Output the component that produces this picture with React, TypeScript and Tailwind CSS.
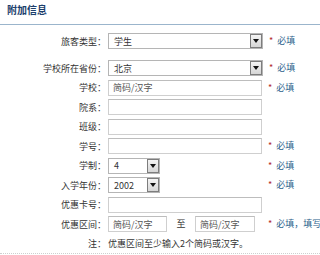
const font = { fontFamily: '"Noto Sans CJK SC", "Noto Sans", sans-serif' };

function Required({ text = "必填" }: { text?: string }) {
  return (
    <span className="ml-[6px] flex shrink-0 items-center whitespace-nowrap">
      <span className="text-[9px] text-[#b22a2a]">*</span>
      <span className="ml-[4px] text-[9px] text-[#2c5f8c]">{text}</span>
    </span>
  );
}

function Select({ value, width }: { value: string; width: string }) {
  return (
    <div className={`flex h-[16px] shrink-0 items-center border border-[#b5b5b5] bg-white ${width}`}>
      <span className="flex-1 pl-[5px] text-[9px] leading-none text-[#333]">{value}</span>
      <span className="flex h-[14px] w-[12px] items-center justify-center border border-[#7d7d7d] bg-gradient-to-b from-[#f4f4f4] to-[#d6d6d6]">
        <svg width="6" height="4" viewBox="0 0 6 4">
          <path d="M0 0H6L3 4Z" fill="#111" />
        </svg>
      </span>
    </div>
  );
}

function Input({ placeholder, width = "w-[154px]" }: { placeholder?: string; width?: string }) {
  return (
    <div className={`flex h-[16px] shrink-0 items-center border border-[#cfcfcf] border-t-[#bdbdbd] bg-white ${width}`}>
      {placeholder && <span className="pl-[4px] text-[9px] leading-none text-[#555]">{placeholder}</span>}
    </div>
  );
}

function Row({ label, h, children }: { label: string; h: string; children?: React.ReactNode }) {
  return (
    <div className={`flex items-center ${h}`}>
      <div className="w-[106px] shrink-0 text-right text-[9px] leading-none text-[#333]">{label}</div>
      <div className="ml-[2px] flex shrink-0 items-center">{children}</div>
    </div>
  );
}

export default function App() {
  return (
    <div className="h-[255px] w-[320px] overflow-hidden bg-white" style={font}>
      <div className="flex h-[25px] items-center border-b border-[#9bb5cc] pb-[5px] pl-[7px]">
        <span className="text-[10px] font-bold text-[#1d3f6c]">附加信息</span>
      </div>
      <div className="pt-[6px]">
        <Row label="旅客类型：" h="h-[20px]">
          <Select value="学生" width="w-[155px]" />
          <Required />
        </Row>
        <div className="mt-[7px]">
          <Row label="学校所在省份：" h="h-[20px]">
            <Select value="北京" width="w-[155px]" />
            <Required />
          </Row>
          <Row label="学校：" h="h-[19px]">
            <Input placeholder="简码/汉字" />
            <Required />
          </Row>
          <Row label="院系：" h="h-[20px]">
            <Input />
          </Row>
          <Row label="班级：" h="h-[19px]">
            <Input />
          </Row>
          <Row label="学号：" h="h-[20px]">
            <Input />
            <Required />
          </Row>
          <Row label="学制：" h="h-[19px]">
            <Select value="4" width="w-[52px]" />
            <span className="w-[102px] shrink-0" />
            <Required />
          </Row>
          <Row label="入学年份：" h="h-[20px]">
            <Select value="2002" width="w-[52px]" />
            <span className="w-[102px] shrink-0" />
            <Required />
          </Row>
          <Row label="优惠卡号：" h="h-[19px]">
            <Input />
          </Row>
          <Row label="优惠区间：" h="h-[20px]">
            <Input placeholder="简码/汉字" width="w-[59px]" />
            <span className="w-[28px] shrink-0 text-center text-[9px] text-[#333]">至</span>
            <Input placeholder="简码/汉字" width="w-[60px]" />
            <span className="ml-[7px]" />
            <Required text="必填，填写与" />
          </Row>
          <Row label="注：" h="h-[19px]">
            <span className="whitespace-nowrap text-[9px] leading-none text-[#333]">优惠区间至少输入2个简码或汉字。</span>
          </Row>
        </div>
      </div>
      <div className="border-t border-dotted border-[#cfcfcf]" />
    </div>
  );
}
